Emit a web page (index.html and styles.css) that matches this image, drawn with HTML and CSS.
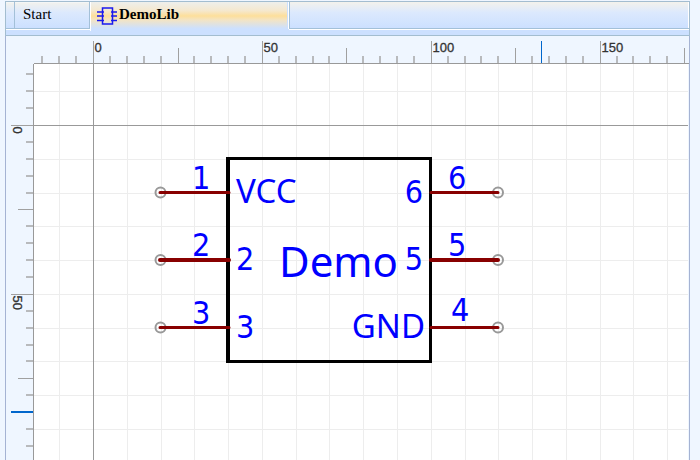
FILE: index.html
```html
<!DOCTYPE html>
<html lang="en">
<head>
<meta charset="utf-8">
<title>DemoLib</title>
<link rel="stylesheet" href="styles.css">
</head>
<body>
<main class="app">
  <nav class="tabs" aria-label="Documents">
    <span class="lead"></span>
    <button class="tab" type="button">Start</button>
    <button class="tab active" type="button"><svg class="chip" width="20" height="18" viewBox="0 0 20 18" aria-hidden="true"><path d="M5.500 1h10v16h-10zM0 5H7M0 9H7M0 13.500H7M14 5h6M14 9h6M14 13.500h6"/></svg>DemoLib</button>
    <span class="rest"></span>
  </nav>
  <section class="editor">
    <div class="corner"></div>
    <svg class="ruler top" id="top"></svg>
    <svg class="ruler side" id="side"></svg>
    <svg class="sheet" id="sheet" role="img" aria-label="Demo component symbol">
      <g id="grid"></g>
      <path class="body" d="M193 94.500H398M193 297.500H398M396.500 94V298"/>
      <path class="edge" d="M194 93V299"/>
      <g class="pad">
        <circle cx="126.500" cy="128.500" r="5"/><circle cx="126.500" cy="196" r="5"/><circle cx="126.500" cy="263.500" r="5"/>
        <circle cx="464" cy="128.500" r="5"/><circle cx="464" cy="196" r="5"/><circle cx="464" cy="263.500" r="5"/>
      </g>
      <path class="pin" d="M126 128.500H195M126 263.500H195M397 128.500H464M397 263.500H464"/>
      <path class="pin thick" d="M126 196H195M397 196H464"/>
      <g class="label">
        <text x="158" y="125">1</text><text x="158" y="192">2</text><text x="158" y="260">3</text>
        <text x="414" y="125">6</text><text x="414" y="192">5</text><text x="417" y="257">4</text>
        <text class="word" x="202" y="139">VCC</text><text x="202" y="206">2</text><text x="202" y="274">3</text>
        <text class="end" x="389" y="139">6</text><text class="end" x="389" y="206">5</text><text class="word end" x="391" y="274">GND</text>
        <text class="word name" x="245" y="213">Demo</text>
      </g>
    </svg>
  </section>
</main>
<script src="rulers.js"></script>
</body>
</html>
```
FILE: rulers.js
```js
const NS = "http://www.w3.org/2000/svg";
const UNIT = 3.377;
const ORIGIN = { x: 59.1, y: 61 };

function add(parent, tag, attrs, text) {
  const el = document.createElementNS(NS, tag);
  for (const key in attrs) el.setAttribute(key, attrs[key]);
  if (text !== undefined) el.textContent = text;
  parent.appendChild(el);
}

function snap(origin, units) {
  return Math.round(origin + units * UNIT) + 0.5;
}

function drawRuler(svg, origin, vertical, marker) {
  svg.replaceChildren();
  const length = vertical ? svg.clientHeight : svg.clientWidth;
  const depth = vertical ? svg.clientWidth : svg.clientHeight;
  for (let n = -Math.floor(origin / UNIT / 5); ; n++) {
    const p = snap(origin, n * 5);
    if (p > length) break;
    const major = n % 10 === 0;
    const minor = n % 5 !== 0;
    const size = major ? 22 : minor ? 7 : 15;
    const at = minor ? p - 0.5 : p;
    add(svg, "path", { class: minor ? "tick minor" : "tick", d: vertical ? `M${depth - size} ${at}H${depth}` : `M${at} ${depth - size}V${depth}` });
    if (major) {
      const place = vertical ? `translate(7 ${p + 1}) rotate(90)` : `translate(${p + 1} 16)`;
      add(svg, "text", { transform: place }, n * 5);
    }
  }
  add(svg, "path", { class: vertical ? "marker wide" : "marker", d: vertical ? `M${depth - 22} ${marker}H${depth}` : `M${marker + 0.5} ${depth - 22}V${depth}` });
}

function drawGrid() {
  const sheet = document.getElementById("sheet");
  const grid = document.getElementById("grid");
  const w = sheet.clientWidth, h = sheet.clientHeight;
  grid.replaceChildren();
  for (let n = -1; ORIGIN.x + n * 10 * UNIT < w; n++) {
    add(grid, "path", { class: "line", d: `M${snap(ORIGIN.x, n * 10)} 0V${h}` });
  }
  for (let n = -1; ORIGIN.y + n * 10 * UNIT < h; n++) {
    add(grid, "path", { class: "line", d: `M0 ${snap(ORIGIN.y, n * 10)}H${w}` });
  }
  add(grid, "path", { class: "axis", d: `M${snap(ORIGIN.x, 0)} 0V${h}M0 ${snap(ORIGIN.y, 0)}H${w}` });
}

function draw() {
  drawRuler(document.getElementById("top"), ORIGIN.x, false, 507);
  drawRuler(document.getElementById("side"), ORIGIN.y, true, 348);
  drawGrid();
}

draw();
addEventListener("resize", draw);
```
FILE: styles.css
```css
* { box-sizing: border-box; }
body {
  margin: 0;
  background: #eff6ff;
}
.app {
  display: flex;
  flex-direction: column;
  min-height: 100vh;
  padding-top: 1px;
  margin: 0 10px 0 5px;
}
.tabs {
  display: flex;
  height: 35px;
  border: 1px solid #a3bdd0;
  background: #cce0ff;
  padding-bottom: 6px;
}
.lead, .rest, .tab {
  border: 0 solid #a3c0d8;
  border-bottom-width: 1px;
  background: linear-gradient(#f3f2ec, #dce9fd 40%, #cce0ff);
  box-shadow: 0 1px #fff, inset 0 1px #f4f6f6;
}
.lead { width: 9px; border-right-width: 1px; }
.rest { flex: 1; border-left-width: 1px; margin-left: 2px; box-shadow: 0 1px #fff, -1px 0 #fff, inset -1px 0 #fff; }
.tab {
  display: flex;
  align-items: flex-start;
  width: 75px;
  margin: 0;
  padding: 4px 8px;
  border-right-width: 1px;
  font: 15px/17px "Liberation Serif", serif;
  color: #000;
}
.tab.active {
  width: 197px;
  margin-bottom: -2px;
  padding-left: 7px;
  gap: 2px;
  border: 0;
  background: linear-gradient(#eeefec, #f5e8ce 30%, #fddf9b 48%, #f3e4c4 62%, #cce0ff 92%);
  box-shadow: inset 1px 0 #fff;
  font-weight: bold;
}
.chip {
  flex: none;
  margin-top: 1px;
  fill: none;
  stroke: #1a1aee;
  stroke-width: 1.5;
}
.editor {
  flex: 1;
  display: grid;
  grid-template: 28px 1fr / 28px 1fr;
  border: 1px solid #a5b3d3;
  border-width: 0 1px;
}
.ruler, .sheet {
  display: block;
  width: 100%;
  height: 100%;
  min-height: 0;
}
.top { border-bottom: 1px solid #999; }
.side { border-right: 1px solid #999; }
.sheet { background: #fff; border-right: 1px solid #eff6ff; }
.ruler text {
  font: 13px "Liberation Sans", sans-serif;
  fill: #333;
  stroke: #333;
  stroke-width: 0.3px;
}
.tick { stroke: #a0a0a0; }
.minor { stroke: #b8babd; stroke-width: 2px; }
.marker { stroke: #06c; }
.wide { stroke-width: 2px; }
.line { stroke: #ededed; }
.axis { stroke: #999; fill: none; }
.body { fill: none; stroke: #000; stroke-width: 3px; }
.edge { stroke: #000; stroke-width: 4px; }
.pad { fill: none; stroke: #999; stroke-width: 2px; }
.pin { fill: none; stroke: #800; stroke-width: 3px; stroke-linecap: round; }
.thick { stroke-width: 4px; }
.label {
  font: 32px "DejaVu Sans Condensed", "DejaVu Sans", sans-serif;
  fill: #00f;
}
.word { font-family: "Noto Sans", sans-serif; font-size: 33px; }
.end { text-anchor: end; }
.name { font-size: 42px; }
```
